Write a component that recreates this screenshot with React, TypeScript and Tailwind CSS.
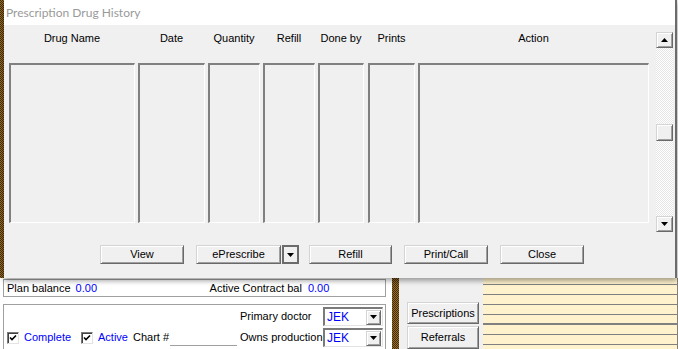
import React from 'react';

type BtnProps = {
  children?: React.ReactNode;
  className?: string;
};

// classic raised windows button
const WinButton: React.FC<BtnProps> = ({ children, className = '' }) => (
  <div
    className={
      'flex items-center justify-center whitespace-nowrap bg-[#f0f0f0] border border-t-[#d4d4d4] border-l-[#d4d4d4] border-b-[#696969] border-r-[#696969] shadow-[inset_1px_1px_0_#ffffff,inset_-1px_-1px_0_#a0a0a0] ' +
      className
    }
  >
    {children}
  </div>
);

const ArrowDown = () => (
  <svg width="7" height="4" viewBox="0 0 7 4">
    <path d="M0 0H7L3.5 4Z" fill="#000" />
  </svg>
);

const ArrowUp = () => (
  <svg width="7" height="4" viewBox="0 0 7 4">
    <path d="M0 4H7L3.5 0Z" fill="#000" />
  </svg>
);

const columns = [
  { name: 'Drug Name', w: 'w-[126px]', ml: 'ml-0' },
  { name: 'Date', w: 'w-[67px]', ml: 'ml-[3px]' },
  { name: 'Quantity', w: 'w-[52px]', ml: 'ml-[3px]' },
  { name: 'Refill', w: 'w-[52px]', ml: 'ml-[3px]' },
  { name: 'Done by', w: 'w-[46px]', ml: 'ml-[3px]' },
  { name: 'Prints', w: 'w-[47px]', ml: 'ml-[4px]' },
  { name: 'Action', w: 'w-[231px]', ml: 'ml-[3px]' },
];

const Combo: React.FC<{ value: string }> = ({ value }) => (
  <div className="w-[60px] h-[19px] flex items-center bg-white border-t-2 border-l-2 border-t-[#7a7a7a] border-l-[#7a7a7a] border-b border-r border-b-[#e3e3e3] border-r-[#e3e3e3]">
    <span className="flex-1 pl-[2px] text-[#0000ff] text-[12px]">{value}</span>
    <WinButton className="w-[15px] h-[15px] mr-[1px]">
      <ArrowDown />
    </WinButton>
  </div>
);

const CheckBox = () => (
  <div className="w-[12px] h-[12px] shrink-0 bg-white border-t border-l border-t-[#7a7a7a] border-l-[#7a7a7a] border-b border-r border-b-[#e3e3e3] border-r-[#e3e3e3] shadow-[inset_1px_1px_0_#404040] flex items-center justify-center">
    <svg width="8" height="8" viewBox="0 0 8 8">
      <path d="M1 3.5L3 5.5L7 1.5" stroke="#000" strokeWidth="1.6" fill="none" />
    </svg>
  </div>
);

const checker =
  'bg-[image:repeating-conic-gradient(#a06a22_0%_25%,#3a3010_0%_50%)] bg-[length:2px_2px]';

export default function App() {
  return (
    <div className="w-[678px] h-[349px] overflow-hidden flex flex-col bg-[#f0f0f0] font-['Liberation_Sans',Arial,sans-serif] text-[11px] text-black">
      <div className="flex h-[278px] shrink-0">
        <div className={'w-[4px] ' + checker} />

        {/* dialog window */}
        <div className="w-[673px] relative z-10 flex flex-col bg-[#f0f0f0] border-r-2 border-r-[#6b6b6b] shadow-[0_3px_5px_rgba(0,0,0,0.35)]">
          <div className="h-[25px] bg-white pl-[2px] flex items-center text-[#9a9a9a] text-[12px] font-['Lato',sans-serif]">
            Prescription Drug History
          </div>
          <div className="flex-1 flex flex-col">
            <div className="flex pt-[6px] pl-[5px]">
              {columns.map((c) => (
                <div key={c.name} className={'flex flex-col items-center ' + c.w + ' ' + c.ml}>
                  <div className="h-[14px] leading-[14px] whitespace-nowrap">{c.name}</div>
                  <div className="mt-[18px] w-full h-[160px] border-t-2 border-l-2 border-t-[#808080] border-l-[#808080] border-b border-r border-b-white border-r-white" />
                </div>
              ))}
              {/* scrollbar */}
              <div className="ml-[7px] mt-[1px] w-[17px] h-[200px] flex flex-col bg-[image:repeating-conic-gradient(#ffffff_0%_25%,#e6e6e6_0%_50%)] bg-[length:2px_2px]">
                <WinButton className="h-[16px]">
                  <ArrowUp />
                </WinButton>
                <div className="h-[76px]" />
                <WinButton className="h-[17px]" />
                <div className="flex-1" />
                <WinButton className="h-[16px]">
                  <ArrowDown />
                </WinButton>
              </div>
            </div>

            <div className="flex pl-[96px] mt-[13px]">
              <WinButton className="w-[84px] h-[19px]">View</WinButton>
              <WinButton className="ml-[12px] w-[85px] h-[19px]">ePrescribe</WinButton>
              <div className="ml-[1px] w-[17px] h-[19px] border-2 border-[#6b6b6b] bg-[#f0f0f0] flex items-center justify-center">
                <ArrowDown />
              </div>
              <WinButton className="ml-[10px] w-[83px] h-[19px]">Refill</WinButton>
              <WinButton className="ml-[12px] w-[84px] h-[19px]">Print/Call</WinButton>
              <WinButton className="ml-[12px] w-[84px] h-[19px]">Close</WinButton>
            </div>
          </div>
        </div>

        <div className="w-[1px] bg-[#f0f0f0]" />
      </div>

      <div className="flex flex-1 min-h-0">
        {/* patient panel */}
        <div className="w-[392px] bg-white pl-[3px] pr-[6px] flex flex-col">
          <div className="mt-[1px] h-[18px] border border-[#a0a0a0] flex items-center pl-[3px] whitespace-nowrap">
            <span>Plan balance</span>
            <span className="ml-[5px] text-[#0000ff] w-[134px]">0.00</span>
            <span>Active Contract bal</span>
            <span className="ml-[6px] text-[#0000ff]">0.00</span>
          </div>
          <div className="mt-[7px] flex-1 border border-b-0 border-[#a0a0a0] flex pt-[2px]">
            <div className="w-[236px] flex flex-col">
              <div className="h-[19px]" />
              <div className="mt-[2px] h-[19px] flex items-center pl-[3px] whitespace-nowrap">
                <div className="w-[74px] flex items-center">
                  <CheckBox />
                  <span className="ml-[5px] text-[#0000ff]">Complete</span>
                </div>
                <CheckBox />
                <span className="ml-[5px] w-[35px] text-[#0000ff]">Active</span>
                <span className="w-[37px]">Chart #</span>
                <div className="w-[67px] h-[16px] border-b border-b-[#a0a0a0]" />
              </div>
            </div>
            <div className="flex flex-col whitespace-nowrap">
              <div className="flex h-[19px] items-center">
                <span className="w-[83px]">Primary doctor</span>
                <Combo value="JEK" />
              </div>
              <div className="mt-[2px] flex h-[19px] items-center">
                <span className="w-[83px]">Owns production</span>
                <Combo value="JEK" />
              </div>
            </div>
          </div>
        </div>

        <div className={'w-[7px] ' + checker} />

        <div className="w-[84px] bg-[#f0f0f0] pl-[8px] pt-[24px] flex flex-col">
          <WinButton className="w-[72px] h-[22px]">Prescriptions</WinButton>
          <WinButton className="mt-[2px] w-[72px] h-[24px]">Referrals</WinButton>
        </div>

        <div className="flex-1 bg-[#fff2cc] border-r border-r-[#808080] pt-[6px] flex flex-col">
          <div className="h-[10px] shrink-0 border-t border-t-[#808080]" />
          <div className="h-[10px] shrink-0 border-t border-t-[#808080]" />
          <div className="h-[10px] shrink-0 border-t border-t-[#808080]" />
          <div className="h-[9px] shrink-0 border-t border-t-[#808080]" />
          <div className="h-[11px] shrink-0 border-t-2 border-t-[#808080]" />
          <div className="h-[10px] shrink-0 border-t border-t-[#808080]" />
          <div className="h-[10px] shrink-0 border-t border-t-[#808080]" />
        </div>
      </div>
    </div>
  );
}
